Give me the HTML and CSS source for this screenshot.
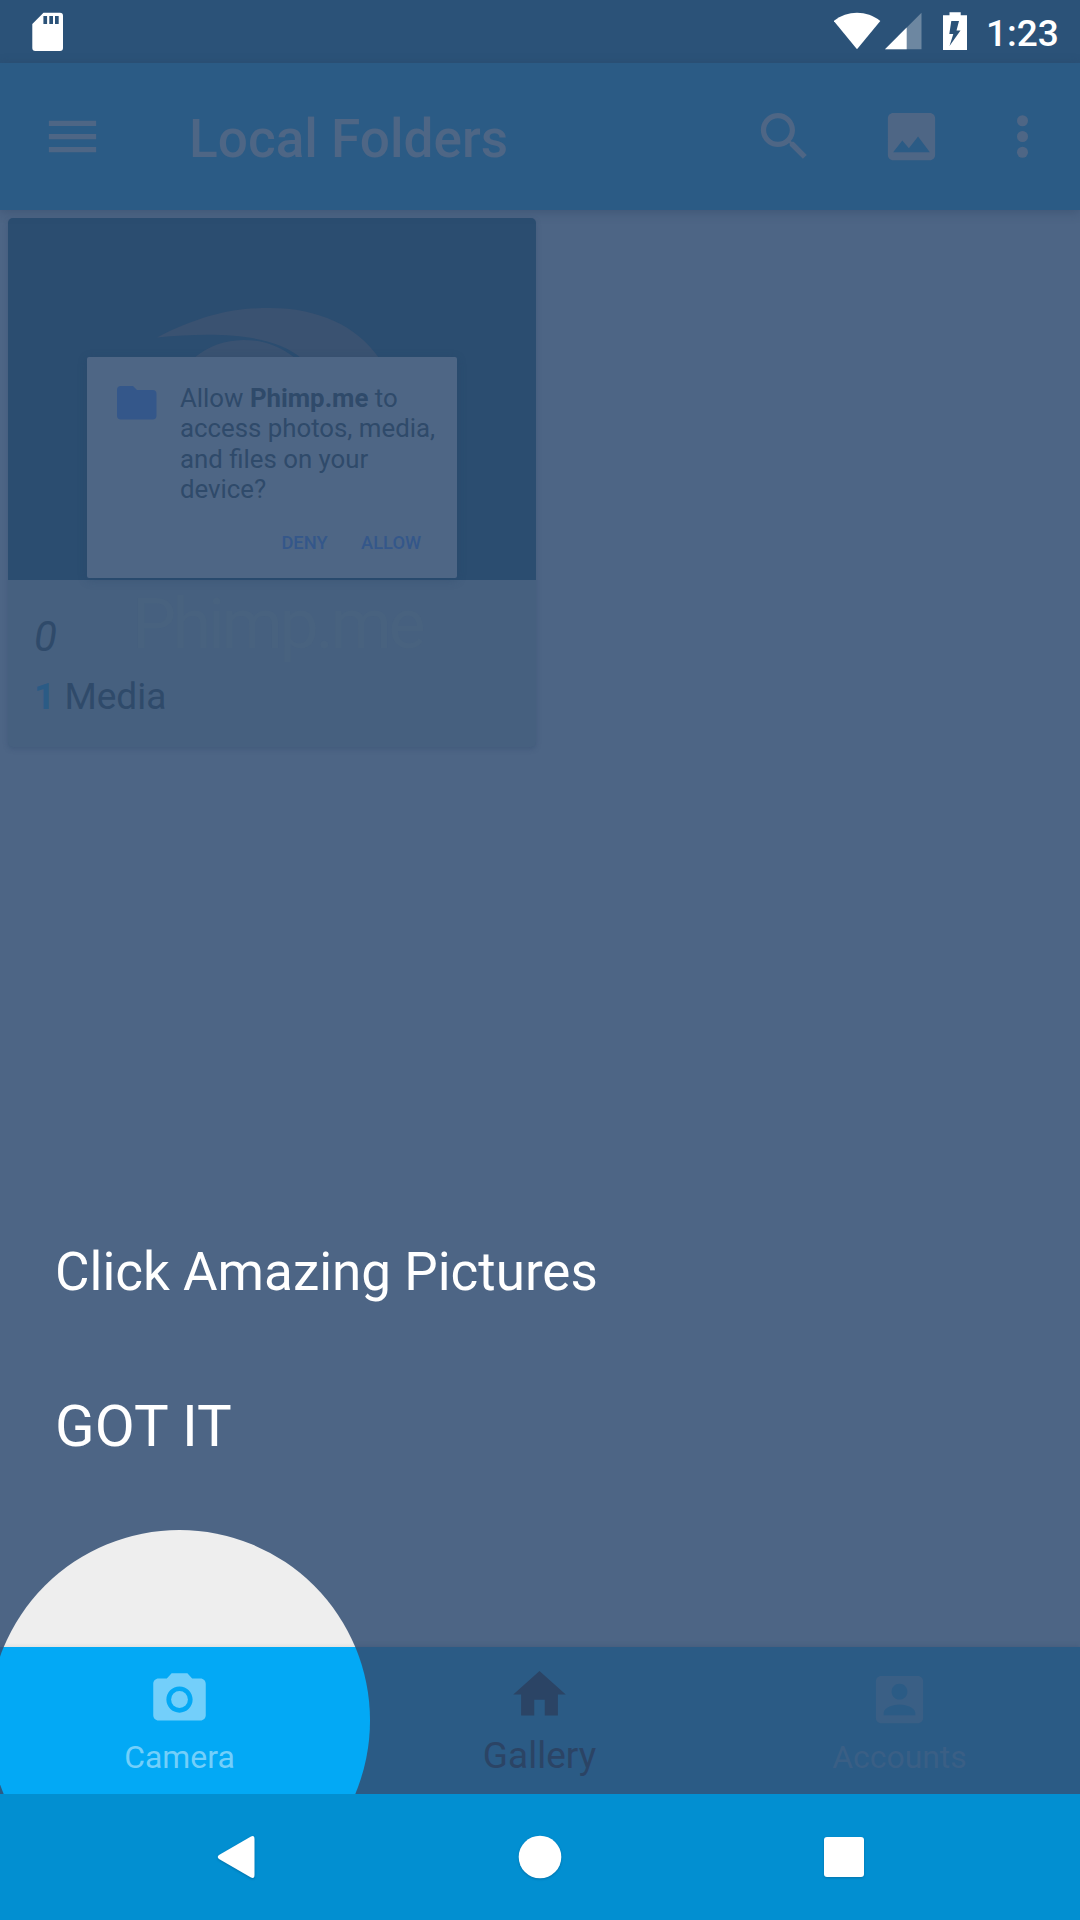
FILE: index.html
```html
<!DOCTYPE html>
<html lang="en">
<head>
<meta charset="utf-8">
<title>Local Folders</title>
<link rel="stylesheet" href="styles.css">
</head>
<body>
<div class="screen">
  <header class="status">
    <svg class="sd" width="32" height="63" viewBox="32 0 32 63"><path fill="#fff" fill-rule="evenodd" d="M43.5 12.7H60a3 3 0 0 1 3 3V48a3 3 0 0 1-3 3H35.300a3 3 0 0 1-3-3V24zM43.400 16v8h3.700v-8zM49.300 16v8H53v-8zM55 16v8h3.700v-8z"/></svg>
    <svg width="47" height="63" viewBox="834 0 47 63"><path fill="#fff" d="M857 49.200L833.800 21C847 10 867 10 880.300 21z"/></svg>
    <svg class="signal" width="37" height="63" viewBox="885 0 37 63"><path fill="#6d87a1" d="M921.500 12.700V49.200H885z"/><path fill="#fff" d="M906.700 27.500V49.200H885z"/></svg>
    <svg class="battery" width="24" height="63" viewBox="943 0 24 63"><path fill="#fff" fill-rule="evenodd" d="M949.500 12.200h11.200v3H967V50h-24V15.200h6.500zM951.300 21L949.300 34h4l-3.800 12L960.500 30.500h-4L959 21z"/></svg>
    <span class="clock">1:23</span>
  </header>

  <div class="toolbar">
    <svg class="icon" viewBox="0 0 24 24"><path d="M3 18h18v-2H3v2zm0-5h18v-2H3v2zm0-7v2h18V6H3z"/></svg>
    <h1 class="title">Local Folders</h1>
    <svg class="icon search" viewBox="0 0 24 24"><path d="M15.500 14h-.79l-.28-.27C15.410 12.590 16 11.110 16 9.500 16 5.910 13.090 3 9.500 3S3 5.910 3 9.500 5.910 16 9.500 16c1.610 0 3.090-.59 4.230-1.570l.27.28v.79l5 4.990L20.490 19l-4.990-5zm-6 0C7.010 14 5 11.990 5 9.500S7.010 5 9.500 5 14 7.010 14 9.500 11.990 14 9.500 14z"/></svg>
    <svg class="icon picture" viewBox="0 0 24 24"><path d="M21 19V5c0-1.100-.9-2-2-2H5c-1.100 0-2 .9-2 2v14c0 1.100.9 2 2 2h14c1.100 0 2-.9 2-2zM8.500 13.500l2.500 3.010L14.500 12l4.500 6H5l3.500-4.500z"/></svg>
    <svg class="icon more" viewBox="0 0 24 24"><circle cx="12" cy="6" r="2.100"/><circle cx="12" cy="12" r="2.100"/><circle cx="12" cy="18" r="2.100"/></svg>
  </div>

  <main class="content">
    <article class="album">
      <div class="thumb">
        <svg class="swirl" width="528" height="362" viewBox="8 218 528 362"><path d="M157 337.500C203 314 235 308 270 308C318 308 357 326 379 358H301C275 336 225 331 157 337.500zM194 358C210 345 225 340.500 243 340C262 340 278 345 295 358z"/></svg>
        <div class="dialog">
          <svg class="folder" width="40" height="34" viewBox="0 0 40 34"><path d="M4 0h12l4 4h15.500a4 4 0 0 1 4 4v21.500a4 4 0 0 1-4 4H4a4 4 0 0 1-4-4V4a4 4 0 0 1 4-4z"/></svg>
          <p class="message">Allow <b>Phimp.me</b> to<br>access photos, media,<br>and files on your<br>device?</p>
          <div class="actions"><span>DENY</span><span>ALLOW</span></div>
        </div>
      </div>
      <div class="caption">
        <span class="ghost">Phimp.me</span>
        <div class="name">0</div>
        <div class="count"><b>1</b> Media</div>
      </div>
    </article>
    <section class="hint">
      <p class="hint-text">Click Amazing Pictures</p>
      <p class="hint-action">GOT IT</p>
    </section>
  </main>

  <nav class="tabs">
    <div class="spotlight"></div>
    <div class="tab camera">
      <svg class="icon" viewBox="0 0 24 24"><circle cx="12" cy="12" r="3.200"/><path d="M9 2L7.170 4H4c-1.100 0-2 .9-2 2v12c0 1.100.9 2 2 2h16c1.100 0 2-.9 2-2V6c0-1.100-.9-2-2-2h-3.170L15 2H9zm3 15c-2.760 0-5-2.240-5-5s2.240-5 5-5 5 2.240 5 5-2.240 5-5 5z"/></svg>
      <span>Camera</span>
    </div>
    <div class="tab gallery">
      <svg class="icon" viewBox="0 0 24 24"><path d="M10 20v-6h4v6h5v-8h3L12 3 2 12h3v8z"/></svg>
      <span>Gallery</span>
    </div>
    <div class="tab accounts">
      <svg class="icon" viewBox="0 0 24 24"><path d="M3 5v14c0 1.100.89 2 2 2h14c1.100 0 2-.9 2-2V5c0-1.100-.9-2-2-2H5c-1.110 0-2 .9-2 2zm12 4c0 1.660-1.340 3-3 3s-3-1.340-3-3 1.340-3 3-3 3 1.340 3 3zm-9 8c0-2 4-3.100 6-3.100s6 1.100 6 3.100v1H6v-1z"/></svg>
      <span>Accounts</span>
    </div>
  </nav>

  <footer class="system">
    <svg width="44" height="50" viewBox="0 0 44 50"><path d="M37 4.500Q40.500 3 40.500 7V43Q40.500 47 37 45.500L5 27Q2.500 25 5 23z"/></svg>
    <svg width="50" height="50" viewBox="0 0 50 50"><circle cx="25" cy="25" r="21.300"/></svg>
    <svg width="44" height="50" viewBox="0 0 44 50"><rect x="2" y="5" width="40" height="40" rx="3"/></svg>
  </footer>
</div>
</body>
</html>
```
FILE: styles.css
```css
* { box-sizing: border-box; }
body, h1, p { margin: 0; }
body { font-family: Roboto, "Liberation Sans", sans-serif; }
svg { display: block; flex: none; }

.screen {
  width: 1080px;
  height: 1920px;
  display: flex;
  flex-direction: column;
  overflow: hidden;
  background: #4d6585;
}

.status {
  height: 63px;
  display: flex;
  align-items: center;
  padding: 0 22px 0 32px;
  background: #2b5278;
}
.sd { margin-right: auto; }
.signal { margin-left: 4px; }
.battery { margin-left: 21px; }
.clock {
  width: 72px;
  margin-left: 19px;
  color: #fff;
  font-size: 37px;
  font-weight: 500;
  line-height: 63px;
  padding-top: 3px;
}

.toolbar {
  height: 147px;
  display: flex;
  align-items: center;
  padding: 0 26px 0 41px;
  background: #2b5b85;
  box-shadow: 0 2px 10px rgba(40, 60, 90, .35);
  position: relative;
}
.icon { width: 63px; height: 63px; }
.toolbar .icon { fill: #4e6685; }
.title {
  flex: 1;
  margin-left: 85px;
  padding-top: 4px;
  color: #4e6685;
  font-size: 53.200px;
  font-weight: 500;
  line-height: 60px;
}
.picture { margin-left: 64px; }
.more { margin-left: 48px; }

.content {
  flex: 1;
  padding: 8px;
}
.album {
  width: 528px;
  height: 529px;
  border-radius: 5px;
  overflow: hidden;
  background: #46607f;
  box-shadow: 0 2px 5px rgba(50, 75, 110, .4);
}
.thumb {
  height: 362px;
  display: grid;
  background: #2b4d70;
}
.swirl { grid-area: 1 / 1; fill: #3a5271; }
.dialog {
  grid-area: 1 / 1;
  width: 370px;
  height: 221px;
  margin: 139px 0 0 79px;
  padding: 26px 24px 0 29.500px;
  display: grid;
  grid-template-columns: 40px 1fr;
  column-gap: 23.500px;
  align-content: start;
  border-radius: 2px;
  background: #4e6685;
  box-shadow: 0 2px 10px rgba(35, 65, 100, .3);
}
.folder { margin-top: 3px; fill: #34578a; }
.message {
  color: #2f4a6a;
  font-size: 25.800px;
  line-height: 30.300px;
  white-space: nowrap;
}
.actions {
  grid-column: 1 / 3;
  display: flex;
  justify-content: flex-end;
  gap: 33.500px;
  margin-top: 28px;
  padding-right: 14px;
  color: #34578a;
  font-size: 18.300px;
  font-weight: 500;
  line-height: 22px;
}
.caption {
  height: 167px;
  padding: 32px 26px 0;
  position: relative;
  color: #2f4a6a;
}
.ghost {
  position: absolute;
  left: 124px;
  top: 3px;
  color: #48627f;
  font-size: 70px;
  letter-spacing: -3.400px;
  line-height: 82px;
}
.name {
  position: relative;
  font-size: 42px;
  font-style: italic;
  line-height: 50px;
}
.count {
  margin-top: 12.500px;
  font-size: 37px;
  line-height: 44px;
}
.count b { color: #2b5b85; }

.hint {
  margin: 494px 0 0 47px;
  color: #fff;
}
.hint-text { font-size: 53px; line-height: 63px; }
.hint-action { margin-top: 88px; font-size: 58.200px; line-height: 69px; }

.tabs {
  height: 147px;
  display: grid;
  grid-template-columns: repeat(3, 1fr);
  position: relative;
  background: #2b5b85;
  box-shadow: 0 -1px 5px rgba(40, 60, 90, .2);
}
.spotlight {
  position: absolute;
  left: -11px;
  top: -117px;
  width: 381px;
  height: 381px;
  border-radius: 50%;
  background: linear-gradient(#eee 0 113px, #e2e2e2 117px, #03a9f5 117px);
}
.tab {
  display: flex;
  flex-direction: column;
  align-items: center;
  position: relative;
  padding: 21px 1px 0 0;
  font-size: 31.900px;
  line-height: 38px;
}
.tab span { margin-top: 7px; }
.camera { color: #73cffa; fill: #73cffa; }
.gallery {
  padding-top: 16px;
  color: #2b4465;
  fill: #2b4465;
  font-size: 37px;
  line-height: 44px;
}
.gallery span { margin-top: 8px; }
.accounts { color: #3a5f85; fill: #3a5f85; }

.system {
  height: 126px;
  display: flex;
  align-items: center;
  justify-content: space-between;
  padding: 0 214px;
  position: relative;
  background: #028fd1;
  fill: #fff;
}
.system svg { filter: drop-shadow(0 1px 1px rgba(0, 60, 100, .35)); }
```
